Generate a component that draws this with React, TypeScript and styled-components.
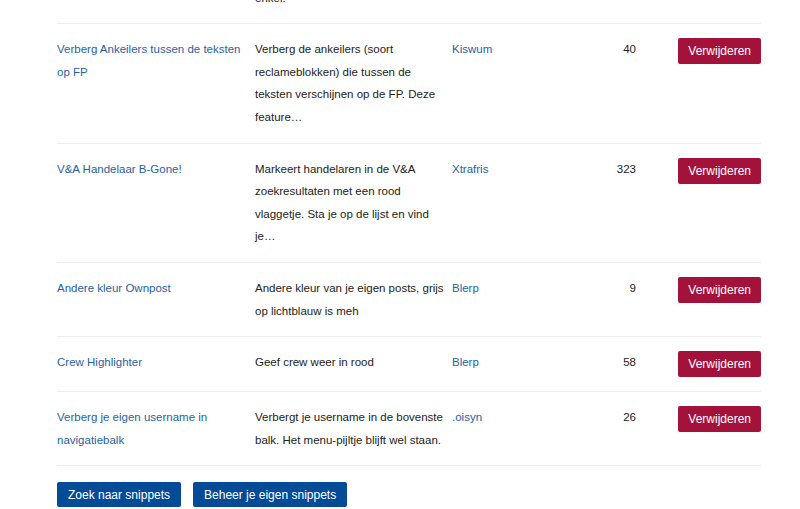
import React from 'react';
import styled, { createGlobalStyle } from 'styled-components';

const GlobalStyle = createGlobalStyle`
    body {
        margin: 0;
        background: #fff;
        font-family: "Liberation Sans", Arial, sans-serif;
        font-size: 11.5px;
        color: #222;
    }
`;

const Page = styled.div`
    width: 704px;
    margin: -50px 0 0 57px;
`;

const Table = styled.div`
    display: flex;
    flex-direction: column;
`;

const Row = styled.div`
    display: grid;
    grid-template-columns: 198px 197px 120px 64px 1fr;
    align-items: start;
    padding: 14px 0;
    border-bottom: 1px solid #eeeeee;
    line-height: 22.6px;
`;

const Cell = styled.div<{ $pad?: number }>`
    padding-right: ${p => (p.$pad ?? 10)}px;
`;

const NumCell = styled.div`
    text-align: right;
`;

const ActionCell = styled.div`
    display: flex;
    justify-content: flex-end;
`;

const Link = styled.a`
    color: #1f62a8;
    text-decoration: none;
    cursor: pointer;
`;

const Button = styled.button<{ $variant?: 'danger' | 'primary' }>`
    font-family: "Liberation Sans", Arial, sans-serif;
    font-size: 12px;
    line-height: 16px;
    color: #fff;
    border: none;
    border-radius: 2px;
    cursor: pointer;
    background: ${p => (p.$variant === 'danger' ? '#a3123a' : '#034b97')};
    padding: ${p => (p.$variant === 'danger' ? '5px 10px' : '5px 11px 4px')};
`;

const Actions = styled.div`
    display: flex;
    gap: 12px;
    margin-top: 16px;
`;

const snippets = [
    { title: 'Zoeken', desc: 'Zoekt in de lijst met snippets\nenkel.', author: 'Blerp', count: 12 },
    { title: 'Verberg Ankeilers tussen de teksten op FP', desc: 'Verberg de ankeilers (soort reclameblokken) die tussen de teksten verschijnen op de FP. Deze feature…', author: 'Kiswum', count: 40 },
    { title: 'V&A Handelaar B-Gone!', desc: 'Markeert handelaren in de V&A zoekresultaten met een rood vlaggetje. Sta je op de lijst en vind je…', author: 'Xtrafris', count: 323 },
    { title: 'Andere kleur Ownpost', desc: 'Andere kleur van je eigen posts, grijs op lichtblauw is meh', author: 'Blerp', count: 9 },
    { title: 'Crew Highlighter', desc: 'Geef crew weer in rood', author: 'Blerp', count: 58 },
    { title: 'Verberg je eigen username in navigatiebalk', desc: 'Verbergt je username in de bovenste balk. Het menu-pijltje blijft wel staan.', author: '.oisyn', count: 26 },
];

const App = () => (
    <>
        <GlobalStyle />
        <Page>
            <Table>
                {snippets.map((s, i) => (
                    <Row key={i}>
                        <Cell><Link>{s.title}</Link></Cell>
                        <Cell $pad={4} style={{ whiteSpace: i === 0 ? 'pre-line' : undefined }}>{s.desc}</Cell>
                        <Cell><Link>{s.author}</Link></Cell>
                        <NumCell>{s.count}</NumCell>
                        <ActionCell><Button $variant="danger">Verwijderen</Button></ActionCell>
                    </Row>
                ))}
            </Table>
            <Actions>
                <Button $variant="primary">Zoek naar snippets</Button>
                <Button $variant="primary">Beheer je eigen snippets</Button>
            </Actions>
        </Page>
    </>
);

export default App;
